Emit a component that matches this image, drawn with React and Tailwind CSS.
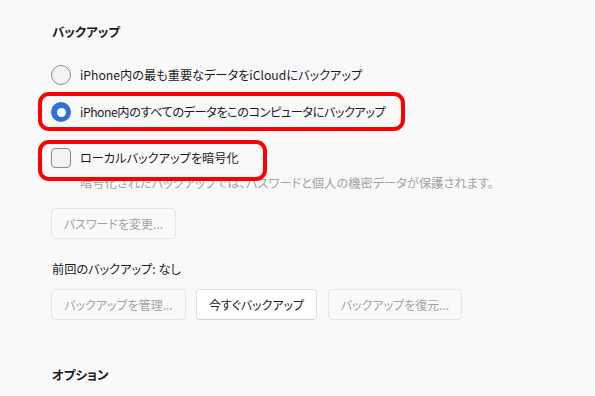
export default function App() {
  const font = "font-['Noto_Sans_CJK_JP','Noto_Sans',sans-serif] [font-feature-settings:'palt']";
  return (
    <div className={`w-[595px] h-[396px] overflow-hidden bg-[#f9f9f9] text-[#1b1b1b] pl-[51px] ${font}`}>
      <div className="flex flex-col">
        <div className="mt-[24px] h-[16px] leading-[16px] text-[12.5px] font-semibold pl-[1px]">バックアップ</div>

        <div className="mt-[25px] h-[20px] flex items-center gap-[9px]">
          <div className="w-[20px] h-[20px] rounded-full border border-[#8b8b8b] bg-[#f3f3f3]" />
          <span className="text-[12.2px] leading-[16px]">iPhone内の最も重要なデータをiCloudにバックアップ</span>
        </div>

        <div className="relative mt-[17px] h-[20px] flex items-center gap-[9px]">
          <div className="w-[20px] h-[20px] rounded-full bg-[#2f6fdb] flex items-center justify-center">
            <div className="w-[9px] h-[9px] rounded-full bg-white" />
          </div>
          <span className="text-[12.2px] leading-[16px] tracking-[-0.45px]">iPhone内のすべてのデータをこのコンピュータにバックアップ</span>
          <div className="absolute left-[-13px] top-[-10px] w-[367px] h-[39px] border-4 border-[#ff0000] rounded-[11px] pointer-events-none" />
        </div>

        <div className="relative mt-[26px] h-[20px] flex items-center gap-[9px]">
          <div className="w-[20px] h-[20px] rounded-[4px] border border-[#8b8b8b] bg-[#f3f3f3]" />
          <span className="text-[12.2px] leading-[16px]">ローカルバックアップを暗号化</span>
          <div className="absolute left-[-13px] top-[-8px] w-[229px] h-[41px] border-4 border-[#ff0000] rounded-[11px] pointer-events-none z-10" />
        </div>

        <div className="mt-[7px] h-[16px] leading-[16px] pl-[29px] text-[12.25px] text-[#a3a3a3]">
          暗号化されたバックアップでは、パスワードと個人の機密データが保護されます。
        </div>

        <button className="mt-[17px] w-[125px] h-[31px] rounded-[4px] border border-[#e6e6e6] bg-[#fafafa] text-[12px] text-[#a3a3a3] flex items-center justify-center">
          パスワードを変更...
        </button>

        <div className="mt-[22px] h-[16px] leading-[16px] text-[12.2px] pl-[1px]">前回のバックアップ: なし</div>

        <div className="mt-[12px] flex gap-[10px]">
          <button className="w-[135px] h-[31px] rounded-[4px] border border-[#e6e6e6] bg-[#fafafa] text-[12px] text-[#a3a3a3] flex items-center justify-center">
            バックアップを管理...
          </button>
          <button className="w-[121px] h-[31px] rounded-[4px] border border-[#e0e0e0] border-b-[#d0d0d0] bg-white text-[12px] text-[#1b1b1b] flex items-center justify-center">
            今すぐバックアップ
          </button>
          <button className="ml-[1px] w-[134px] h-[31px] rounded-[4px] border border-[#e6e6e6] bg-[#fafafa] text-[12px] text-[#a3a3a3] flex items-center justify-center">
            バックアップを復元...
          </button>
        </div>

        <div className="mt-[47px] h-[16px] leading-[16px] text-[12.5px] font-semibold pl-[1px]">オプション</div>
      </div>
    </div>
  );
}
